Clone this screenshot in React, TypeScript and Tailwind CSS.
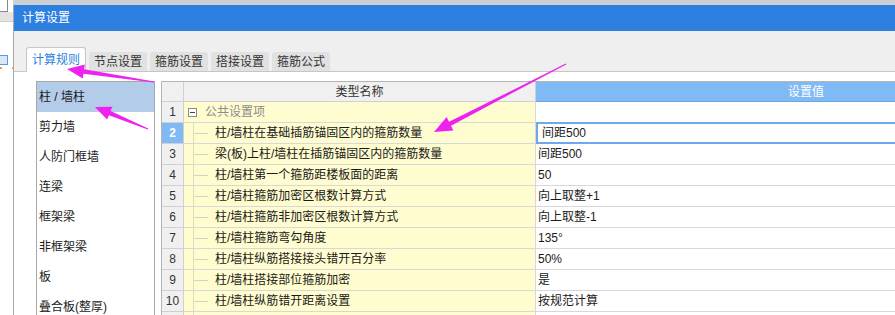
import React from 'react';

interface SettingRow {
  no: number | null;
  name: string;
  value: string;
  group?: boolean;
}

const rows: SettingRow[] = [
  { no: 1, name: '公共设置项', value: '', group: true },
  { no: 2, name: '柱/墙柱在基础插筋锚固区内的箍筋数量', value: '间距500' },
  { no: 3, name: '梁(板)上柱/墙柱在插筋锚固区内的箍筋数量', value: '间距500' },
  { no: 4, name: '柱/墙柱第一个箍筋距楼板面的距离', value: '50' },
  { no: 5, name: '柱/墙柱箍筋加密区根数计算方式', value: '向上取整+1' },
  { no: 6, name: '柱/墙柱箍筋非加密区根数计算方式', value: '向上取整-1' },
  { no: 7, name: '柱/墙柱箍筋弯勾角度', value: '135°' },
  { no: 8, name: '柱/墙柱纵筋搭接接头错开百分率', value: '50%' },
  { no: 9, name: '柱/墙柱搭接部位箍筋加密', value: '是' },
  { no: 10, name: '柱/墙柱纵筋错开距离设置', value: '按规范计算' },
  { no: null, name: '', value: '' },
];

const components = ['柱 / 墙柱', '剪力墙', '人防门框墙', '连梁', '框架梁', '非框架梁', '板', '叠合板(整厚)'];
const tabs = ['计算规则', '节点设置', '箍筋设置', '搭接设置', '箍筋公式'];

// tapered hand-drawn arrow, tail -> tip
const arrow = (x1: number, y1: number, x2: number, y2: number, head: number, headW: number) => {
  const dx = x2 - x1;
  const dy = y2 - y1;
  const len = Math.hypot(dx, dy);
  const ux = dx / len;
  const uy = dy / len;
  const nx = -uy;
  const ny = ux;
  const bx = x2 - ux * head;
  const by = y2 - uy * head;
  const p = (x: number, y: number) => `${x.toFixed(1)},${y.toFixed(1)}`;
  return [
    p(x1 + nx * 0.5, y1 + ny * 0.5),
    p(bx + nx * 2.2, by + ny * 2.2),
    p(bx + nx * headW, by + ny * headW),
    p(x2, y2),
    p(bx - nx * headW, by - ny * headW),
    p(bx - nx * 2.2, by - ny * 2.2),
    p(x1 - nx * 0.5, y1 - ny * 0.5),
  ].join(' ');
};

const App: React.FC = () => {
  return (
    <div
      className="relative flex w-[895px] h-[315px] overflow-hidden bg-white text-[12px] text-[#1a1a1a]"
      style={{ fontFamily: '"Liberation Sans", "Noto Sans CJK SC", sans-serif' }}
    >
      {/* window behind the dialog */}
      <div className="w-[13px] shrink-0 flex flex-col bg-white">
        <div className="h-[12px] w-[8px] shrink-0 border-r border-b border-[#8a8a8a] bg-white"></div>
        <div className="h-[10px] shrink-0 bg-[#e3e3e3] border-b border-[#cfcfcf]"></div>
        <div className="mt-[33px] h-[10px] w-[8px] shrink-0 border border-l-0 border-[#5a9be0] bg-[#d6e8fa]"></div>
        <div className="mt-[2px] flex justify-between">
          <div className="h-[2px] w-[2px] bg-[#f0a040]"></div>
          <div className="h-[2px] w-[1px] bg-[#f0a040]"></div>
        </div>
      </div>

      <div className="flex-1 min-w-0 flex flex-col overflow-hidden">
        <div className="h-[5px] shrink-0 bg-[#ccd0d4]"></div>
        <div className="flex-1 min-h-0 flex flex-col border-l border-[#a8a8a8]">
          <div className="h-[26px] shrink-0 bg-[#2d7fe0] text-white flex items-center pl-[8px] text-[12px]">
            计算设置
          </div>

          <div className="shrink-0 bg-[#efefef] pt-[16px] pl-[12px] flex items-end gap-[3px] border-b border-[#c6c6c6]">
            {tabs.map((t, i) =>
              i === 0 ? (
                <div
                  key={t}
                  className="h-[25px] -mb-px px-[5px] flex items-center bg-white border border-b-0 border-[#c6c6c6] rounded-t-[3px] text-[#2b7fe0]"
                >
                  {t}
                </div>
              ) : (
                <div
                  key={t}
                  className="h-[19px] px-[5px] flex items-center bg-[#e1e1e1] rounded-t-[3px] text-[#333]"
                >
                  {t}
                </div>
              )
            )}
          </div>

          <div className="shrink-0 flex items-start bg-white pt-[9px] pl-[22px] gap-[6px]">
            <div className="w-[119px] shrink-0 border border-[#a8a8a8] flex flex-col">
              {components.map((c, i) => (
                <div
                  key={c}
                  className={`h-[30px] shrink-0 flex items-center pl-[2px] ${i === 0 ? 'bg-[#b3cce9]' : ''}`}
                >
                  {c}
                </div>
              ))}
            </div>

            <div className="flex-1 min-w-0 overflow-hidden border-l border-t border-[#b4b4b4]">
              <div className="w-[914px]">
                <div className="flex h-[20px]">
                  <div className="w-[22px] shrink-0 bg-[#f0f0f0] border-r border-b border-[#d0d0d0]"></div>
                  <div className="w-[352px] shrink-0 bg-[#f0f0f0] border-r border-b border-[#d0d0d0] flex items-center justify-center text-[#333]">
                    类型名称
                  </div>
                  <div className="w-[540px] shrink-0 bg-[#80baf5] border-b border-[#6ea6e6] flex items-center justify-center text-white">
                    设置值
                  </div>
                </div>

                {rows.map((r, idx) => {
                  const sel = r.no === 2;
                  return (
                    <div key={idx} className="flex h-[21px]">
                      <div
                        className={`w-[22px] shrink-0 border-r border-b border-[#d0d0d0] flex items-center justify-center text-[12px] ${
                          sel ? 'bg-[#80baf5] text-white font-bold' : 'bg-[#f0f0f0] text-[#333]'
                        }`}
                      >
                        {r.no}
                      </div>
                      <div className="w-[352px] shrink-0 bg-[#fffdd0] border-r border-b border-[#d8d8d8] flex items-center">
                        {r.group ? (
                          <>
                            <div className="ml-[4px] w-[9px] h-[9px] border border-[#8c8c8c] bg-white flex items-center justify-center">
                              <div className="w-[5px] h-px bg-[#444]"></div>
                            </div>
                            <span className="ml-[8px] text-[#8c8c8c]">{r.name}</span>
                          </>
                        ) : (
                          <>
                            <div className="ml-[9px] self-stretch w-[15px] border-l border-[#dcdcc4] flex items-center">
                              <div className="h-px w-full bg-[#d4d4c0]"></div>
                            </div>
                            <span className="ml-[7px]">{r.name}</span>
                          </>
                        )}
                      </div>
                      <div
                        className={`w-[540px] shrink-0 flex items-center ${
                          sel ? 'border-2 border-[#6fa8e8] pl-[4px] -mt-px h-[22px]' : 'border-b border-[#d8d8d8] pl-[2px]'
                        }`}
                      >
                        {r.value}
                      </div>
                    </div>
                  );
                })}
              </div>
            </div>
          </div>
        </div>
      </div>

      {/* annotation arrows */}
      <svg className="absolute inset-0 pointer-events-none" width="895" height="315">
        <polygon points={arrow(154, 82, 67, 69, 17, 7)} fill="#ee22ee" />
        <polygon points={arrow(148, 129, 95, 107, 16, 7)} fill="#ee22ee" />
        <polygon points={arrow(566, 64, 434, 132, 18, 7.5)} fill="#ee22ee" />
      </svg>
    </div>
  );
};

export default App;
